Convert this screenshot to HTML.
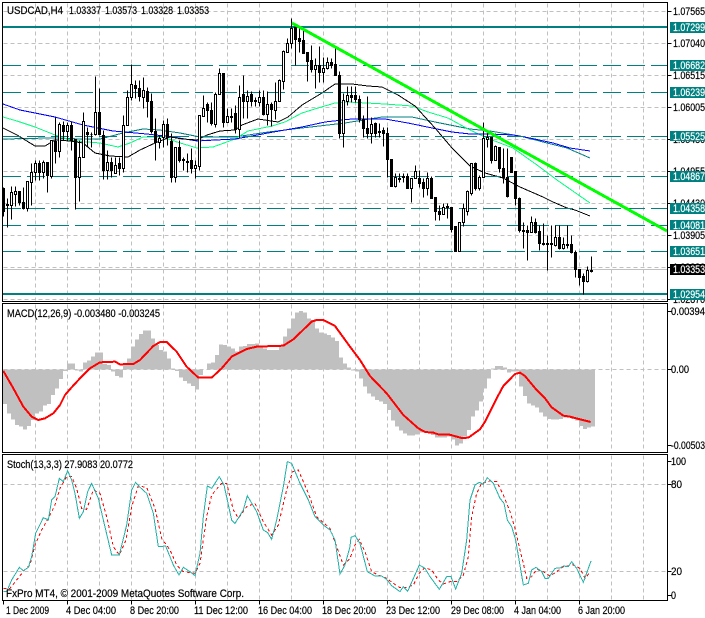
<!DOCTYPE html>
<html><head><meta charset="utf-8"><title>USDCAD,H4</title>
<style>
html,body{margin:0;padding:0;background:#fff;width:705px;height:618px;overflow:hidden}
svg{display:block;position:absolute;left:0;top:0}
text{font-family:"Liberation Sans",sans-serif;font-size:11.2px;fill:#000;stroke:#000;stroke-width:.2px}
text.w{fill:#fff;stroke:#fff}
</style></head><body>
<svg width="705" height="618" viewBox="0 0 705 618" xmlns="http://www.w3.org/2000/svg">
<rect width="705" height="618" fill="#fff"/>
<g shape-rendering="crispEdges" transform="translate(.5,.5)" fill="none">
<!-- grid -->
<path stroke="#c0c0c0" stroke-dasharray="4 3" d="M35 3V300M67 3V300M99 3V300M131 3V300M163 3V300M195 3V300M227 3V300M259 3V300M291 3V300M323 3V300M355 3V300M387 3V300M419 3V300M451 3V300M483 3V300M515 3V300M547 3V300M579 3V300M611 3V300M643 3V300
M35 304V451M67 304V451M99 304V451M131 304V451M163 304V451M195 304V451M227 304V451M259 304V451M291 304V451M323 304V451M355 304V451M387 304V451M419 304V451M451 304V451M483 304V451M515 304V451M547 304V451M579 304V451M611 304V451M643 304V451
M35 455V599M67 455V599M99 455V599M131 455V599M163 455V599M195 455V599M227 455V599M259 455V599M291 455V599M323 455V599M355 455V599M387 455V599M419 455V599M451 455V599M483 455V599M515 455V599M547 455V599M579 455V599M611 455V599M643 455V599
M3 11H667M3 43H667M3 75H667M3 107H667M3 139H667M3 171H667M3 203H667M3 235H667M3 267H667M3 299H667M3 369H667M3 484H667M3 571H667"/>
<path stroke="#c0c0c0" d="M3 269H667"/>
</g>
<!-- moving averages -->
<g fill="none" stroke-width="1" shape-rendering="crispEdges">
<polyline stroke="#008080" points="3,139 50,138 83,139 100,139 123,133 143,129 160,130 180,133 200,137 235,137 268,132 302,128 345,123 382,117 412,117 435,122 470,129 490,131 520,136 547,143 567,148 590,158"/>
<polyline stroke="#00ff7f" points="3,117 17,121 35,127 55,135 70,140 87,142 100,143 118,147 130,143 143,137 163,137 177,142 197,148 213,147 235,139 248,131 272,126 285,122 302,113 318,108 335,103 348,102 385,104 412,106 428,112 448,118 470,130 487,138 513,148 537,165 557,180 590,203"/>
<polyline stroke="#0000ff" points="3,104 20,110 55,117 83,125 113,131 147,134 173,137 197,141 235,139 252,136 268,133 302,127 325,122 352,119 385,119 408,123 432,128 452,132 470,134 490,134 513,135 530,138 553,143 570,148 590,151"/>
<polyline stroke="#000000" points="3,128 17,135 35,146 45,146 55,140 70,141 83,143 95,153 110,156 128,157 140,150 155,143 170,137 183,139 197,140 207,135 220,131 235,130 242,125 258,119 278,122 288,117 302,105 322,93 335,84 352,84 368,86 382,87 398,95 415,106 425,117 435,128 452,148 470,166 485,173 503,178 520,187 543,197 553,202 567,208 575,210 590,216"/>
</g>
<!-- horizontal levels -->
<g shape-rendering="crispEdges" fill="none" stroke="#008080">
<path stroke-width="2" d="M3 27H667M3 294H667"/>
<path stroke-dasharray="18 6" transform="translate(0,.5)" d="M3 65H667M3 92H667M3 136H667M3 176H667M3 208H667M3 225H667M3 251H667"/>
</g>
<!-- candles -->
<g shape-rendering="crispEdges" transform="translate(.5,.5)" stroke="#000" fill="none">
<path d="M3 187V216M7 198V227M11 186V219M15 186V206M19 191V205M23 187V209M27 181V211M31 163V205M35 160V180M39 160V180M43 160V178M47 162V192M51 140V178M55 117V163M59 122V157M63 121V140M67 122V140M71 121V150M75 139V209M79 140V201M83 112V157M87 127V147M91 132V147M95 76V135M99 88V135M103 130V179M107 150V179M111 157V177M115 157V173M119 157V175M123 115V172M127 90V125M131 64V100M135 80V98M139 80V101M143 77V108M147 87V117M151 93V133M155 118V160M159 135V148M163 120V147M167 118V145M171 133V182M175 147V182M179 140V162M183 157V170M187 153V172M191 148V173M195 160V178M199 115V170M203 95V116M207 102V122M211 102V125M215 92V127M219 68V94M223 73V127M227 108V122M231 108V122M235 105V133M239 85V137M243 75V118M247 90V118M251 91V106M255 97V106M259 90V106M263 90V115M267 91V125M271 102V126M275 82V119M279 79V101M283 50V89M287 38V52M291 18V48M295 25V65M299 28V52M303 30V53M307 52V81M311 45V72M315 58V88M319 46V82M323 57V82M327 57V69M331 58V68M335 47V75M339 71V138M343 93V147M347 86V105M351 86V102M355 86V102M359 95V122M363 115V137M367 96V138M371 117V143M375 122V137M379 123V137M383 127V146M387 127V177M391 159V186M395 173V187M399 173V182M403 173V182M407 173V188M411 178V202M415 165V178M419 170V187M423 178V197M427 172V195M431 176V198M435 197V220M439 205V220M443 203V214M447 203V218M451 207V232M455 226V251M459 222V251M463 203V226M467 190V215M471 163V195M475 162V190M479 175V190M483 122V177M487 130V147M491 137V163M495 145V160M499 147V172M503 148V183M507 148V197M511 157V172M515 171V205M519 197V232M523 222V248M527 225V260M531 216V232M535 218V233M539 225V250M543 223V245M547 235V270M551 225V257M555 225V246M559 225V249M563 237V249M567 225V248M571 235V253M575 250V277M579 269V285M583 273V294M587 266V282M591 256V272"/>
<path fill="#fff" d="M10 192h2V205h-2zM14 191h2V194h-2zM26 181h2V208h-2zM30 172h2V182h-2zM34 163h2V172h-2zM42 162h2V172h-2zM50 140h2V176h-2zM58 124h2V151h-2zM66 125h2V131h-2zM78 157h2V177h-2zM82 121h2V157h-2zM94 112h2V134h-2zM106 162h2V170h-2zM114 165h2V173h-2zM122 125h2V168h-2zM126 97h2V125h-2zM130 84h2V97h-2zM142 90h2V97h-2zM158 138h2V142h-2zM162 124h2V137h-2zM174 147h2V177h-2zM194 165h2V168h-2zM198 115h2V166h-2zM202 108h2V116h-2zM214 94h2V124h-2zM218 73h2V94h-2zM226 116h2V122h-2zM238 97h2V129h-2zM246 96h2V101h-2zM258 97h2V102h-2zM266 104h2V114h-2zM274 101h2V110h-2zM278 80h2V101h-2zM282 51h2V81h-2zM286 43h2V52h-2zM290 28h2V43h-2zM314 65h2V69h-2zM322 68h2V72h-2zM326 62h2V68h-2zM342 100h2V133h-2zM346 95h2V101h-2zM370 124h2V133h-2zM394 177h2V186h-2zM410 178h2V188h-2zM414 171h2V178h-2zM426 178h2V188h-2zM442 207h2V214h-2zM458 222h2V251h-2zM462 208h2V222h-2zM466 191h2V211h-2zM470 163h2V193h-2zM478 177h2V188h-2zM482 138h2V177h-2zM486 137h2V139h-2zM494 146h2V160h-2zM530 222h2V232h-2zM554 237h2V245h-2zM562 244h2V248h-2zM586 270h2V281h-2z"/>
<path fill="#000" d="M2 188h2V211h-2zM6 204h2V205h-2zM18 191h2V202h-2zM22 202h2V208h-2zM38 163h2V172h-2zM46 162h2V175h-2zM54 141h2V151h-2zM62 125h2V131h-2zM70 125h2V140h-2zM74 139h2V177h-2zM86 132h2V134h-2zM90 134h2V134h-2zM98 112h2V134h-2zM102 135h2V170h-2zM110 162h2V170h-2zM118 163h2V168h-2zM134 85h2V88h-2zM138 88h2V96h-2zM146 91h2V101h-2zM150 101h2V131h-2zM154 131h2V142h-2zM166 124h2V137h-2zM170 141h2V177h-2zM178 147h2V160h-2zM182 159h2V160h-2zM186 161h2V162h-2zM190 160h2V168h-2zM206 104h2V110h-2zM210 110h2V123h-2zM222 73h2V122h-2zM230 116h2V117h-2zM234 113h2V129h-2zM242 94h2V101h-2zM250 94h2V101h-2zM254 100h2V101h-2zM262 97h2V114h-2zM270 104h2V109h-2zM294 27h2V39h-2zM298 38h2V41h-2zM302 40h2V53h-2zM306 52h2V61h-2zM310 60h2V69h-2zM318 65h2V72h-2zM330 62h2V65h-2zM334 64h2V75h-2zM338 75h2V133h-2zM350 95h2V97h-2zM354 95h2V99h-2zM358 99h2V119h-2zM362 119h2V128h-2zM366 128h2V133h-2zM374 123h2V133h-2zM378 131h2V132h-2zM382 130h2V133h-2zM386 133h2V159h-2zM390 159h2V186h-2zM398 178h2V179h-2zM402 176h2V177h-2zM406 176h2V188h-2zM418 178h2V183h-2zM422 182h2V188h-2zM430 178h2V198h-2zM434 197h2V211h-2zM438 211h2V214h-2zM446 206h2V207h-2zM450 207h2V229h-2zM454 226h2V251h-2zM474 163h2V188h-2zM490 137h2V160h-2zM498 147h2V168h-2zM502 168h2V177h-2zM506 177h2V196h-2zM510 157h2V172h-2zM514 171h2V198h-2zM518 198h2V230h-2zM522 230h2V231h-2zM526 230h2V232h-2zM534 222h2V232h-2zM538 231h2V243h-2zM542 243h2V244h-2zM546 243h2V244h-2zM550 243h2V244h-2zM558 237h2V248h-2zM566 244h2V245h-2zM570 244h2V252h-2zM574 252h2V269h-2zM578 269h2V277h-2zM582 276h2V281h-2zM590 270h2V271h-2z"/>
</g>
<!-- trendline -->
<line x1="292" y1="23" x2="667" y2="231" stroke="#00ff00" stroke-width="3" shape-rendering="crispEdges"/>
<!-- MACD histogram -->
<g transform="translate(0,300) scale(.33333)" shape-rendering="crispEdges">
<path fill="#c0c0c0" d="M9 208V312h12V340h12V358h12V375h12V380h12V388h12V378h12V360h12V340h12V335h12V317h12V312h12V285h12V265h12V237h12V213h12V190h12V190h12V212h12V215h12V187h12V182h12V170h12V158h12V158h12V192h12V195h12V215h12V228h12V233h12V190h12V175h12V140h12V118h12V102h12V92h12V92h12V115h12V135h12V150h12V155h12V175h12V205h12V213h12V232h12V243h12V250h12V258h12V268h12V225h12V208h12V190h12V187h12V165h12V133h12V135h12V140h12V145h12V155h12V140h12V138h12V132h12V132h12V130h12V140h12V145h12V150h12V150h12V150h12V135h12V110h12V85h12V55h12V38h12V33h12V38h12V55h12V60h12V85h12V98h12V100h12V105h12V112h12V123h12V172h12V190h12V202h12V212h12V215h12V235h12V260h12V280h12V290h12V300h12V305h12V312h12V330h12V362h12V380h12V392h12V400h12V407h12V407h12V403h12V398h12V395h12V398h12V405h12V412h12V413h12V412h12V410h12V418h12V437h12V430h12V410h12V390h12V350h12V332h12V305h12V265h12V235h12V205h12V198h12V198h12V203h12V217h12V215h12V215h12V260h12V288h12V310h12V317h12V322h12V338h12V350h12V357h12V358h12V358h12V357h12V352h12V353h12V357h12V362h12V378h12V387h12V383h12V380h12V208z"/>
<polyline fill="none" stroke="#ff0000" stroke-width="6" points="10,213 40,265 70,320 95,350 115,360 135,355 160,340 180,315 195,285 215,262 240,235 270,205 300,187 345,185 360,193 400,192 420,180 460,138 480,126 500,126 530,155 560,200 595,233 635,233 665,205 695,170 740,147 770,140 850,137 880,118 935,65 950,60 970,60 1005,78 1050,140 1080,180 1110,228 1160,280 1210,345 1255,385 1275,396 1300,398 1315,403 1345,403 1385,414 1405,413 1440,388 1455,365 1490,295 1510,258 1545,222 1560,218 1575,228 1610,270 1635,295 1655,322 1690,347 1710,350 1740,358 1772,366"/>
</g>
<!-- Stochastic -->
<g transform="translate(0,450) scale(.33333)" fill="none" stroke-width="3" shape-rendering="crispEdges">
<polyline stroke="#ff0000" stroke-dasharray="9 8" points="10,415 30,415 50,390 75,358 90,345 105,285 125,240 145,205 165,165 180,115 200,80 215,80 230,115 245,175 260,178 280,120 300,130 320,200 340,290 358,315 378,270 395,170 415,108 440,112 465,175 485,265 510,300 530,345 550,365 585,370 600,340 620,200 635,135 665,100 680,100 700,180 715,205 740,170 765,160 790,215 815,255 835,225 860,120 878,65 895,60 925,130 950,200 975,222 990,235 1010,290 1030,345 1050,325 1065,285 1078,268 1095,305 1115,365 1135,375 1160,385 1180,400 1200,413 1220,412 1240,405 1258,370 1275,353 1295,360 1315,390 1330,402 1350,395 1370,395 1390,375 1405,320 1415,200 1430,130 1445,100 1470,93 1490,95 1510,135 1530,185 1545,235 1560,300 1570,340 1580,385 1595,380 1610,358 1630,365 1650,378 1670,365 1690,350 1720,345 1740,355 1755,385 1770,367"/>
<polyline stroke="#20b2aa" points="10,425 20,425 35,390 58,352 70,362 85,352 95,320 107,250 130,203 145,210 155,150 165,140 178,85 190,95 203,62 215,90 225,130 238,205 250,185 263,125 275,100 295,145 310,210 335,315 358,315 380,225 395,120 407,97 420,112 440,130 460,190 475,290 497,288 520,345 537,375 550,352 570,365 585,377 600,310 610,200 622,108 635,115 658,80 672,105 695,210 705,220 730,180 742,137 770,185 790,240 803,248 815,268 830,210 850,110 862,35 875,40 900,100 925,150 945,200 970,225 990,240 1005,270 1020,372 1035,345 1050,290 1053,262 1065,257 1080,280 1102,365 1125,378 1145,378 1160,388 1175,407 1200,425 1210,410 1223,424 1258,345 1275,355 1290,380 1318,418 1340,380 1353,380 1367,417 1385,370 1400,270 1410,150 1425,105 1438,97 1450,103 1462,83 1480,100 1500,145 1512,160 1522,210 1535,230 1547,270 1570,405 1585,400 1595,360 1608,352 1625,365 1635,385 1645,385 1665,355 1680,354 1690,348 1705,350 1715,335 1730,355 1750,397 1773,333"/>
</g>
<!-- frames and ticks -->
<g shape-rendering="crispEdges" transform="translate(.5,.5)" fill="none" stroke="#000">
<path d="M2 2H667V301H2ZM2 303H667V452H2ZM2 454H667V600H2Z"/>
<path d="M667 11h4M667 43h4M667 75h4M667 107h4M667 139h4M667 171h4M667 203h4M667 235h4M667 267h4M667 299h4M667 311h4M667 369h4M667 445h4M667 461h4M667 484h4M667 571h4M667 595h4
M3 600v4M67 600v4M131 600v4M195 600v4M259 600v4M323 600v4M387 600v4M451 600v4M515 600v4M579 600v4"/>
</g>
<!-- axis text -->
<g>
<text x="673" y="15" textLength="32" lengthAdjust="spacingAndGlyphs">1.07565</text>
<text x="673" y="47" textLength="32" lengthAdjust="spacingAndGlyphs">1.07040</text>
<text x="673" y="79" textLength="32" lengthAdjust="spacingAndGlyphs">1.06515</text>
<text x="673" y="111" textLength="32" lengthAdjust="spacingAndGlyphs">1.06005</text>
<text x="673" y="143" textLength="32" lengthAdjust="spacingAndGlyphs">1.05480</text>
<text x="673" y="175" textLength="32" lengthAdjust="spacingAndGlyphs">1.04955</text>
<text x="673" y="207" textLength="32" lengthAdjust="spacingAndGlyphs">1.04430</text>
<text x="673" y="239" textLength="32" lengthAdjust="spacingAndGlyphs">1.03905</text>
<text x="673" y="271" textLength="32" lengthAdjust="spacingAndGlyphs">1.03380</text>
<text x="673" y="303" textLength="32" lengthAdjust="spacingAndGlyphs">1.02870</text>
</g>
<g shape-rendering="crispEdges" fill="#008080">
<rect x="670" y="22" width="35" height="11"/><rect x="670" y="60" width="35" height="11"/><rect x="670" y="87" width="35" height="11"/><rect x="670" y="131" width="35" height="10"/><rect x="670" y="171" width="35" height="11"/><rect x="670" y="203" width="35" height="11"/><rect x="670" y="220" width="35" height="10"/><rect x="670" y="246" width="35" height="11"/><rect x="670" y="289" width="35" height="11"/>
<rect x="670" y="264" width="35" height="11" fill="#000"/>
</g>
<g>
<text class="w" x="673" y="31" textLength="32" lengthAdjust="spacingAndGlyphs">1.07299</text>
<text class="w" x="673" y="69" textLength="32" lengthAdjust="spacingAndGlyphs">1.06682</text>
<text class="w" x="673" y="96" textLength="32" lengthAdjust="spacingAndGlyphs">1.06239</text>
<text class="w" x="673" y="140" textLength="32" lengthAdjust="spacingAndGlyphs">1.05525</text>
<text class="w" x="673" y="180" textLength="32" lengthAdjust="spacingAndGlyphs">1.04867</text>
<text class="w" x="673" y="212" textLength="32" lengthAdjust="spacingAndGlyphs">1.04358</text>
<text class="w" x="673" y="229" textLength="32" lengthAdjust="spacingAndGlyphs">1.04081</text>
<text class="w" x="673" y="255" textLength="32" lengthAdjust="spacingAndGlyphs">1.03651</text>
<text class="w" x="673" y="273" textLength="32" lengthAdjust="spacingAndGlyphs">1.03353</text>
<text class="w" x="673" y="298" textLength="32" lengthAdjust="spacingAndGlyphs">1.02954</text>
<text x="671" y="315" textLength="34" lengthAdjust="spacingAndGlyphs">0.00394</text>
<text x="671" y="373" textLength="18" lengthAdjust="spacingAndGlyphs">0.00</text>
<text x="671" y="449" textLength="34" lengthAdjust="spacingAndGlyphs">-0.00503</text>
<text x="671" y="465" textLength="15" lengthAdjust="spacingAndGlyphs">100</text>
<text x="671" y="488" textLength="11" lengthAdjust="spacingAndGlyphs">80</text>
<text x="671" y="575" textLength="11" lengthAdjust="spacingAndGlyphs">20</text>
<text x="671" y="599" textLength="5" lengthAdjust="spacingAndGlyphs">0</text>
<text x="7" y="14" textLength="56" lengthAdjust="spacingAndGlyphs">USDCAD,H4</text>
<text x="69" y="14" textLength="32" lengthAdjust="spacingAndGlyphs">1.03337</text>
<text x="105" y="14" textLength="32" lengthAdjust="spacingAndGlyphs">1.03573</text>
<text x="141" y="14" textLength="32" lengthAdjust="spacingAndGlyphs">1.03328</text>
<text x="177" y="14" textLength="32" lengthAdjust="spacingAndGlyphs">1.03353</text>
<text x="7" y="317" textLength="153" lengthAdjust="spacingAndGlyphs">MACD(12,26,9) -0.003480 -0.003245</text>
<text x="7" y="468" textLength="126" lengthAdjust="spacingAndGlyphs">Stoch(13,3,3) 27.9083 20.0772</text>
<text x="6" y="597" textLength="238" lengthAdjust="spacingAndGlyphs">FxPro MT4, © 2001-2009 MetaQuotes Software Corp.</text>
<text x="6" y="614" textLength="43" lengthAdjust="spacingAndGlyphs">1 Dec 2009</text>
<text x="66" y="614" textLength="50" lengthAdjust="spacingAndGlyphs">4 Dec 04:00</text>
<text x="130" y="614" textLength="49" lengthAdjust="spacingAndGlyphs">8 Dec 20:00</text>
<text x="194" y="614" textLength="54" lengthAdjust="spacingAndGlyphs">11 Dec 12:00</text>
<text x="258" y="614" textLength="54" lengthAdjust="spacingAndGlyphs">16 Dec 04:00</text>
<text x="322" y="614" textLength="54" lengthAdjust="spacingAndGlyphs">18 Dec 20:00</text>
<text x="386" y="614" textLength="54" lengthAdjust="spacingAndGlyphs">23 Dec 12:00</text>
<text x="451" y="614" textLength="53" lengthAdjust="spacingAndGlyphs">29 Dec 08:00</text>
<text x="514" y="614" textLength="47" lengthAdjust="spacingAndGlyphs">4 Jan 04:00</text>
<text x="578" y="614" textLength="47" lengthAdjust="spacingAndGlyphs">6 Jan 20:00</text>
</g>
</svg>
</body></html>
